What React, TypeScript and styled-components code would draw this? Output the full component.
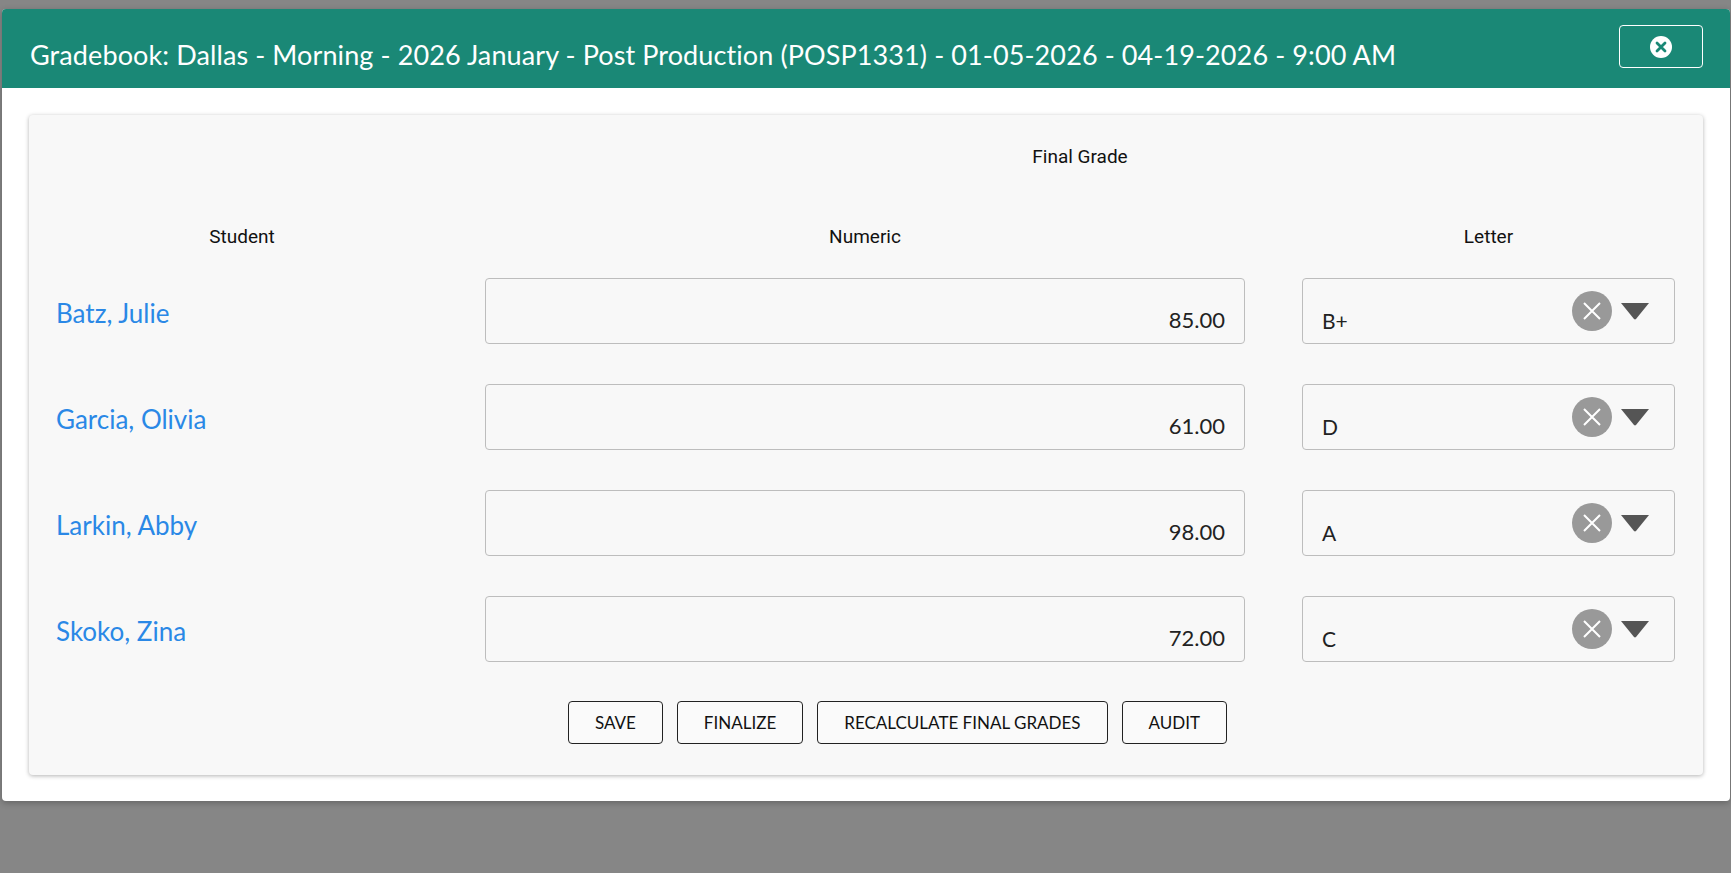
import React from "react";
import styled, { createGlobalStyle } from "styled-components";

const Global = createGlobalStyle`
  html, body { margin: 0; padding: 0; background: #868686; }
  body { font-family: Lato, "Open Sans", sans-serif; }
`;

const Page = styled.div`
  height: 873px;
  padding: 9px 1px 0 2px;
  box-sizing: border-box;
  overflow: hidden;
`;

const Modal = styled.div`
  background: #fff;
  border-radius: 4px;
  overflow: hidden;
  height: 792px;
  box-shadow: 0 2px 6px rgba(0,0,0,0.25);
`;

const Header = styled.div`
  height: 79px;
  background: #1a8876;
  display: flex;
  align-items: center;
  justify-content: space-between;
  padding: 0 27px 0 28px;
  box-sizing: border-box;
`;

const Title = styled.h1`
  margin: 0;
  padding-top: 12px;
  color: #fff;
  font-family: Lato, sans-serif;
  font-weight: 400;
  font-size: 27px;
  letter-spacing: 0.1px;
`;

const CloseBtn = styled.button`
  width: 84px;
  height: 43px;
  margin-top: -4px;
  border: 1px solid #fff;
  border-radius: 4px;
  background: transparent;
  display: flex;
  align-items: center;
  justify-content: center;
  padding: 0;
`;

const Body = styled.div`
  padding: 27px 27px 0 27px;
`;

const Card = styled.div`
  background: #f8f8f8;
  border-radius: 4px;
  box-shadow: 0 1px 4px rgba(0,0,0,0.3);
  padding: 27px 28px 13px 27px;
  height: 660px;
  box-sizing: border-box;
`;

const Grid = styled.div`
  display: grid;
  grid-template-columns: 372px 760px 373px;
  column-gap: 57px;
  margin-left: 0;
`;

const GroupHead = styled.div`
  grid-column: 2 / 4;
  text-align: center;
  font-family: Roboto, "Liberation Sans", sans-serif;
  font-size: 19px;
  color: #111;
  height: 30px;
  line-height: 30px;
  padding-left: 0;
`;

const ColHead = styled.div`
  text-align: center;
  font-family: Roboto, "Liberation Sans", sans-serif;
  font-size: 19px;
  color: #111;
  margin-top: 50px;
  height: 30px;
  line-height: 30px;
  margin-bottom: 26px;
`;

const Name = styled.a`
  align-self: center;
  color: #2a88e6;
  font-size: 26px;
  text-decoration: none;
  margin-bottom: 40px;
  margin-top: 0;
  padding-top: 4px;
`;

const Field = styled.div`
  height: 66px;
  border: 1px solid #bdbdbd;
  border-radius: 4px;
  box-sizing: border-box;
  background: #f8f8f8;
  display: flex;
  align-items: flex-end;
  margin-bottom: 40px;
`;

const Numeric = styled(Field)`
  justify-content: flex-end;
  padding: 0 19px 10px 0;
  font-size: 22px;
  color: #222;
`;

const Letter = styled(Field)`
  padding: 0 0 10px 19px;
  font-size: 21px;
  color: #222;
  position: relative;
`;

const Controls = styled.div`
  position: absolute;
  right: 24px;
  top: 12px;
  display: flex;
  align-items: center;
  gap: 8px;
`;

const Clear = styled.span`
  width: 40px;
  height: 40px;
  border-radius: 50%;
  background: #999;
  display: flex;
  align-items: center;
  justify-content: center;
`;

const Buttons = styled.div`
  display: flex;
  justify-content: center;
  gap: 14px;
  margin-top: -1px;
  padding-left: 64px;
`;

const Btn = styled.button`
  height: 43px;
  padding: 0 26px;
  border: 1px solid #222;
  border-radius: 4px;
  background: #fafafa;
  font-family: Lato, sans-serif;
  font-size: 17px;
  color: #111;
`;

const rows = [
  ["Batz, Julie", "85.00", "B+"],
  ["Garcia, Olivia", "61.00", "D"],
  ["Larkin, Abby", "98.00", "A"],
  ["Skoko, Zina", "72.00", "C"],
];

export default function App() {
  return (
    <>
      <Global />
      <Page>
        <Modal>
          <Header>
            <Title>Gradebook: Dallas - Morning - 2026 January - Post Production (POSP1331) - 01-05-2026 - 04-19-2026 - 9:00 AM</Title>
            <CloseBtn aria-label="close">
              <svg width="24" height="24" viewBox="0 0 24 24">
                <circle cx="12" cy="12" r="11" fill="#fff" />
                <path d="M8 8l8 8M16 8l-8 8" stroke="#1a8876" strokeWidth="2.8" strokeLinecap="round" />
              </svg>
            </CloseBtn>
          </Header>
          <Body>
            <Card>
              <Grid>
                <div />
                <GroupHead>Final Grade</GroupHead>
                <ColHead>Student</ColHead>
                <ColHead>Numeric</ColHead>
                <ColHead>Letter</ColHead>
                {rows.map(([n, v, l]) => (
                  <React.Fragment key={n}>
                    <Name href="#">{n}</Name>
                    <Numeric>{v}</Numeric>
                    <Letter>
                      {l}
                      <Controls>
                        <Clear>
                          <svg width="22" height="22" viewBox="0 0 22 22">
                            <path d="M3 3l16 16M19 3L3 19" stroke="#fff" strokeWidth="2" />
                          </svg>
                        </Clear>
                        <svg width="30" height="20" viewBox="0 0 30 20">
                          <path d="M1 2h28L16 18a1.5 1.5 0 0 1-2 0z" fill="#555" />
                        </svg>
                      </Controls>
                    </Letter>
                  </React.Fragment>
                ))}
              </Grid>
              <Buttons>
                <Btn>SAVE</Btn>
                <Btn>FINALIZE</Btn>
                <Btn>RECALCULATE FINAL GRADES</Btn>
                <Btn>AUDIT</Btn>
              </Buttons>
            </Card>
          </Body>
        </Modal>
      </Page>
    </>
  );
}
